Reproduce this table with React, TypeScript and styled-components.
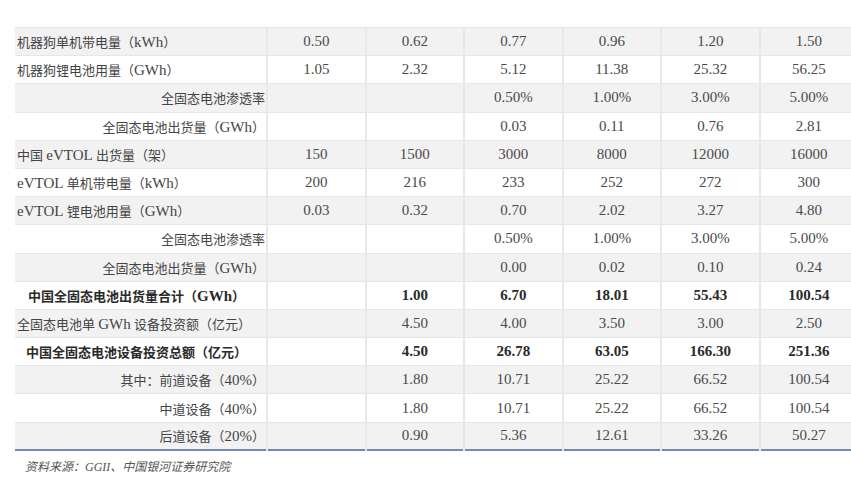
import React from 'react';
import styled, { createGlobalStyle } from 'styled-components';

const GlobalStyle = createGlobalStyle`
  html, body {
    margin: 0;
    padding: 0;
    background: #fff;
    overflow: hidden;
  }
`;

const Page = styled.div`
  width: 851px;
  height: 478px;
  padding: 27px 0 0 15px;
  box-sizing: border-box;
  overflow: hidden;
  font-family: 'Liberation Serif', 'Noto Sans CJK SC', serif;
  color: #444;
`;

const Table = styled.table`
  width: 844px;
  border-collapse: collapse;
  table-layout: fixed;
  border-top: 1px solid #e4e4e4;
  border-bottom: 2px solid #7189bd;
`;

const Row = styled.tr<{ $shaded: boolean }>`
  height: 28.2px;
  background: ${(p) => (p.$shaded ? '#f2f2f2' : '#fff')};
  border-bottom: 1px solid #e6e6e6;

  &:last-child {
    border-bottom: none;
  }
`;

const LabelCell = styled.td<{ $align: 'left' | 'right' | 'center'; $bold?: boolean }>`
  width: 252px;
  box-sizing: border-box;
  padding: 0 1px 0 2px;
  font-size: 13px;
  white-space: nowrap;
  text-align: ${(p) => p.$align};
  font-weight: ${(p) => (p.$bold ? 700 : 400)};
  color: ${(p) => (p.$bold ? '#2a2a2a' : '#444')};
  border-right: 2px solid #e8e8e8;
  ${(p) => (p.$align === 'center' ? 'padding-right: 10px;' : '')}
`;

const Latin = styled.span`
  font-size: 15px;
`;

const ValueCell = styled.td<{ $bold?: boolean }>`
  padding: 0;
  font-size: 15px;
  text-align: center;
  white-space: nowrap;
  font-weight: ${(p) => (p.$bold ? 700 : 400)};
  color: ${(p) => (p.$bold ? '#2a2a2a' : '#4a4a4a')};
  border-right: 2px solid #e8e8e8;
`;

const Source = styled.div`
  margin: 6px 0 0 10px;
  font-size: 12px;
  font-style: italic;
  color: #555;
`;

type RowData = {
  label: string;
  align: 'left' | 'right' | 'center';
  bold?: boolean;
  values: string[];
};

const rows: RowData[] = [
  { label: '机器狗单机带电量（kWh）', align: 'left', values: ['0.50', '0.62', '0.77', '0.96', '1.20', '1.50'] },
  { label: '机器狗锂电池用量（GWh）', align: 'left', values: ['1.05', '2.32', '5.12', '11.38', '25.32', '56.25'] },
  { label: '全固态电池渗透率', align: 'right', values: ['', '', '0.50%', '1.00%', '3.00%', '5.00%'] },
  { label: '全固态电池出货量（GWh）', align: 'right', values: ['', '', '0.03', '0.11', '0.76', '2.81'] },
  { label: '中国 eVTOL 出货量（架）', align: 'left', values: ['150', '1500', '3000', '8000', '12000', '16000'] },
  { label: 'eVTOL 单机带电量（kWh）', align: 'left', values: ['200', '216', '233', '252', '272', '300'] },
  { label: 'eVTOL 锂电池用量（GWh）', align: 'left', values: ['0.03', '0.32', '0.70', '2.02', '3.27', '4.80'] },
  { label: '全固态电池渗透率', align: 'right', values: ['', '', '0.50%', '1.00%', '3.00%', '5.00%'] },
  { label: '全固态电池出货量（GWh）', align: 'right', values: ['', '', '0.00', '0.02', '0.10', '0.24'] },
  { label: '中国全固态电池出货量合计（GWh）', align: 'center', bold: true, values: ['', '1.00', '6.70', '18.01', '55.43', '100.54'] },
  { label: '全固态电池单 GWh 设备投资额（亿元）', align: 'left', values: ['', '4.50', '4.00', '3.50', '3.00', '2.50'] },
  { label: '中国全固态电池设备投资总额（亿元）', align: 'center', bold: true, values: ['', '4.50', '26.78', '63.05', '166.30', '251.36'] },
  { label: '其中：前道设备（40%）', align: 'right', values: ['', '1.80', '10.71', '25.22', '66.52', '100.54'] },
  { label: '中道设备（40%）', align: 'right', values: ['', '1.80', '10.71', '25.22', '66.52', '100.54'] },
  { label: '后道设备（20%）', align: 'right', values: ['', '0.90', '5.36', '12.61', '33.26', '50.27'] },
];

// latin runs in the labels are set a little larger than the CJK text
const renderLabel = (text: string) =>
  text.split(/([A-Za-z0-9%]+)/).map((part, i) =>
    /^[A-Za-z0-9%]+$/.test(part) ? <Latin key={i}>{part}</Latin> : part,
  );

const App: React.FC = () => (
  <Page>
    <GlobalStyle />
    <Table>
      <colgroup>
        <col style={{ width: 252 }} />
        <col />
        <col />
        <col />
        <col />
        <col />
        <col />
      </colgroup>
      <tbody>
        {rows.map((row, i) => (
          <Row key={i} $shaded={i % 2 === 0}>
            <LabelCell $align={row.align} $bold={row.bold}>
              {renderLabel(row.label)}
            </LabelCell>
            {row.values.map((v, j) => (
              <ValueCell key={j} $bold={row.bold}>
                {v}
              </ValueCell>
            ))}
          </Row>
        ))}
      </tbody>
    </Table>
    <Source>资料来源：GGII、中国银河证券研究院</Source>
  </Page>
);

export default App;
